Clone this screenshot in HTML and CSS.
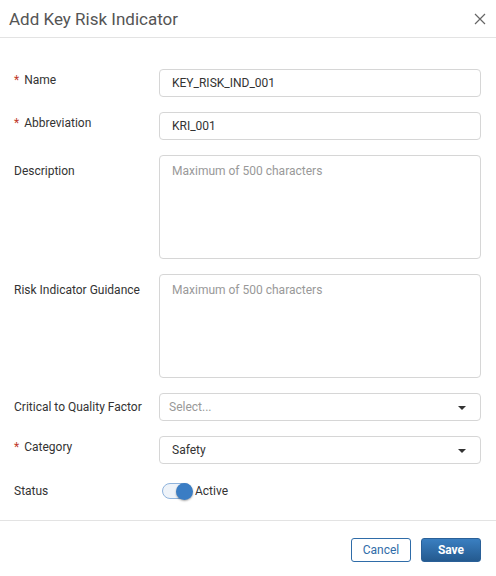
FILE: index.html
```html
<!DOCTYPE html>
<html lang="en">
<head>
    <meta charset="UTF-8">
    <meta name="viewport" content="width=device-width, initial-scale=1.0">
    <title>Add Key Risk Indicator</title>
    <link rel="stylesheet" href="styles.css">
</head>
<body>

    <div class="dialog">
        <!-- Header -->
        <div class="dialog-header">
            <h1>Add Key Risk Indicator</h1>
            <button class="close-btn" aria-label="Close">
                <svg width="12" height="12" viewBox="0 0 12 12">
                    <path d="M1 1 L11 11 M11 1 L1 11" stroke="#666" stroke-width="1.2" fill="none"/>
                </svg>
            </button>
        </div>

        <!-- Form -->
        <div class="dialog-body">
            <div class="form-row">
                <label class="field-label"><span class="req">*</span>Name</label>
                <div class="field input">KEY_RISK_IND_001</div>
            </div>

            <div class="form-row">
                <label class="field-label"><span class="req">*</span>Abbreviation</label>
                <div class="field input">KRI_001</div>
            </div>

            <div class="form-row">
                <label class="field-label tall">Description</label>
                <div class="field textarea placeholder">Maximum of 500 characters</div>
            </div>

            <div class="form-row">
                <label class="field-label tall">Risk Indicator Guidance</label>
                <div class="field textarea placeholder">Maximum of 500 characters</div>
            </div>

            <div class="form-row">
                <label class="field-label mid">Critical to Quality Factor</label>
                <div class="field select placeholder">
                    <span class="select-value">Select...</span>
                    <span class="caret"></span>
                </div>
            </div>

            <div class="form-row">
                <label class="field-label"><span class="req">*</span>Category</label>
                <div class="field select">
                    <span class="select-value">Safety</span>
                    <span class="caret"></span>
                </div>
            </div>

            <div class="form-row status-row">
                <label class="field-label">Status</label>
                <div class="toggle-wrap">
                    <span class="toggle"><span class="knob"></span></span>
                    <span class="toggle-text">Active</span>
                </div>
            </div>
        </div>

        <!-- Footer -->
        <div class="dialog-footer">
            <button class="btn btn-outline">Cancel</button>
            <button class="btn btn-primary">Save</button>
        </div>
    </div>

</body>
</html>
```

FILE: styles.css
```css
body {
    font-family: Roboto, "Liberation Sans", Arial, sans-serif;
    margin: 0;
    background-color: #fff;
    color: #333;
}

.dialog {
    width: 496px;
    height: 576px;
    display: flex;
    flex-direction: column;
}

/* Header */
.dialog-header {
    height: 37px;
    flex-shrink: 0;
    border-bottom: 1px solid #e3e3e3;
    display: flex;
    align-items: center;
    justify-content: space-between;
    padding: 0 10px 0 9px;
}

.dialog-header h1 {
    font-size: 17px;
    font-weight: 400;
    color: #555;
    margin: 0;
}

.close-btn {
    border: none;
    background: none;
    padding: 0;
    width: 12px;
    height: 12px;
    display: flex;
    cursor: pointer;
}

/* Body */
.dialog-body {
    padding: 31px 15px 0 14px;
    display: flex;
    flex-direction: column;
    gap: 15px;
    height: 482px;
    flex-shrink: 0;
    box-sizing: border-box;
}

.form-row {
    display: flex;
}

.field-label {
    width: 145px;
    flex-shrink: 0;
    font-size: 12px;
    line-height: 16px;
    padding-top: 3px;
    color: #333;
}

.field-label.tall {
    padding-top: 8px;
}

.field-label.mid {
    padding-top: 6px;
}

.req {
    color: #c0392b;
    margin-right: 5px;
}

.field {
    flex: 1;
    border: 1px solid #d6d6d6;
    border-radius: 4px;
    box-sizing: border-box;
    font-size: 12px;
    color: #333;
}

.field.input {
    height: 28px;
    line-height: 26px;
    padding: 0 12px;
}

.field.textarea {
    height: 104px;
    padding: 7px 12px;
    line-height: 16px;
}

.field.select {
    height: 28px;
    display: flex;
    align-items: center;
    justify-content: space-between;
    padding: 0 14px 0 12px;
}

.placeholder {
    color: #999;
}

.field.select.placeholder {
    padding-left: 9px;
}

.caret {
    width: 0;
    height: 0;
    border-left: 4px solid transparent;
    border-right: 4px solid transparent;
    border-top: 4px solid #333;
    margin-top: 1px;
}

/* Status toggle */
.status-row {
    margin-top: 4px;
    align-items: center;
}

.status-row .field-label {
    padding-top: 0;
}

.toggle-wrap {
    display: flex;
    align-items: center;
    padding-left: 3px;
}

.toggle {
    width: 30px;
    height: 16px;
    border: 1px solid #8fb3dc;
    border-radius: 9px;
    background-color: #eef3f9;
    box-sizing: border-box;
    position: relative;
    display: inline-block;
}

.knob {
    position: absolute;
    right: -2px;
    top: -1px;
    width: 17px;
    height: 17px;
    border-radius: 50%;
    background-color: #3a7dc4;
    box-shadow: 0 1px 2px rgba(0,0,0,0.35);
}

.toggle-text {
    font-size: 12px;
    margin-left: 3px;
    color: #333;
}

/* Footer */
.dialog-footer {
    flex: 1;
    border-top: 1px solid #e3e3e3;
    display: flex;
    justify-content: flex-end;
    align-items: flex-start;
    gap: 10px;
    padding: 17px 15px 0 0;
}

.btn {
    height: 24px;
    width: 60px;
    border-radius: 3px;
    font-family: inherit;
    font-size: 12px;
    cursor: pointer;
    padding: 0;
}

.btn-outline {
    background-color: #fff;
    border: 1px solid #2f6ca8;
    color: #2f6ca8;
}

.btn-primary {
    background: linear-gradient(#3a7fc1, #245a8f);
    border: 1px solid #2a6098;
    color: #fff;
    font-weight: 700;
}
```
